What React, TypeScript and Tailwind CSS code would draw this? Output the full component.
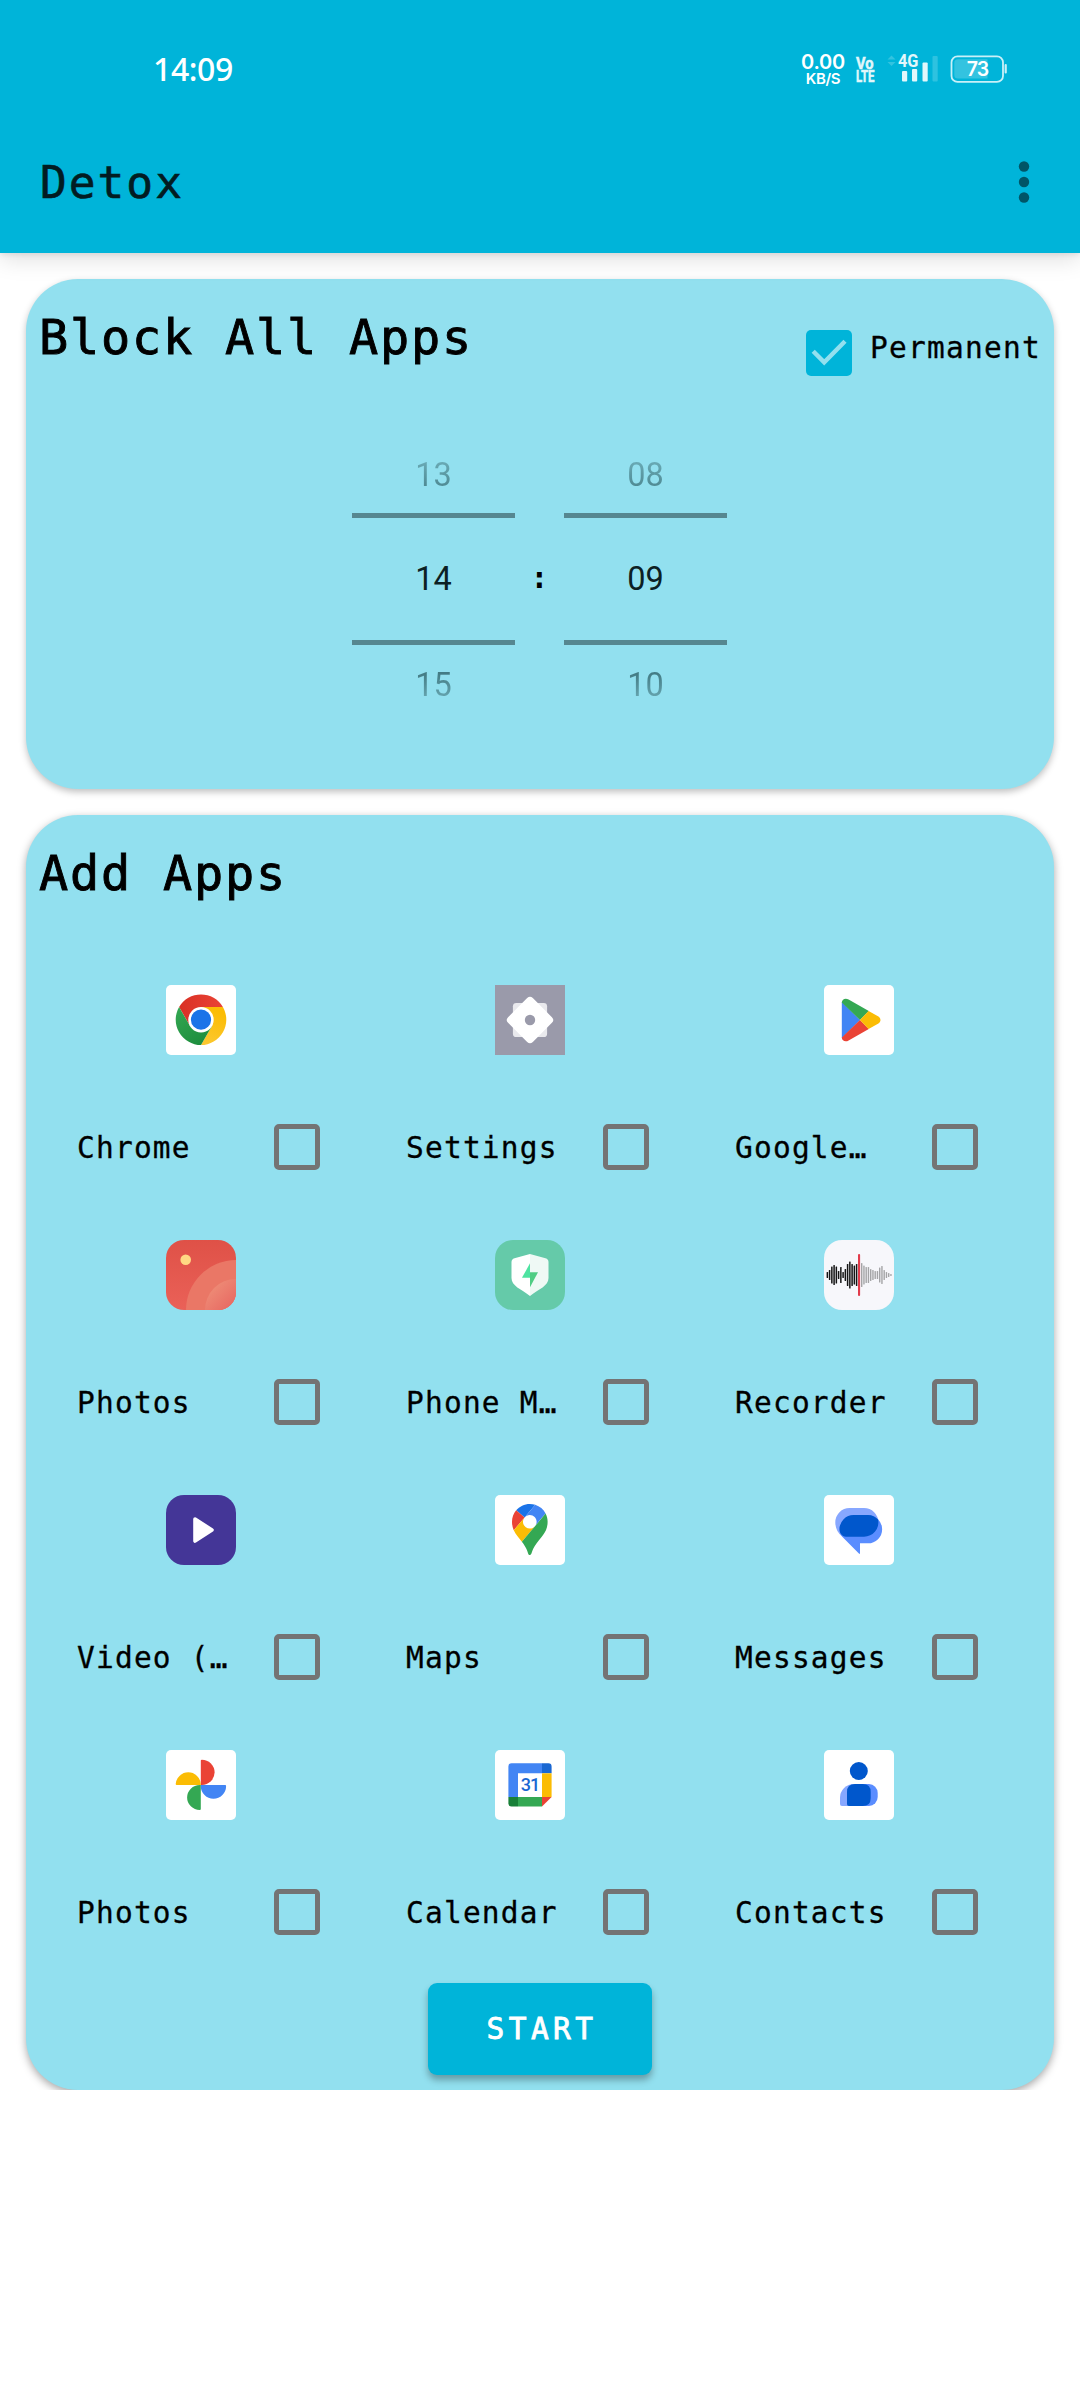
import type { ReactNode } from "react";

const MONO = "font-['DejaVu_Sans_Mono',monospace]";

function Tile({ color, radius, children }: { color: string; radius: number; children: ReactNode }) {
  return (
    <svg width="70" height="70" viewBox="0 0 70 70" className="block">
      <rect width="70" height="70" rx={radius} fill={color} />
      {children}
    </svg>
  );
}

const ChromeIcon = () => (
  <Tile color="#fff" radius={5}>
    <defs>
      <linearGradient id="chromeRed" x1="0" x2="1">
        <stop offset="0" stopColor="#d93025" />
        <stop offset="1" stopColor="#ea4335" />
      </linearGradient>
      <linearGradient id="chromeYellow" x1="0" y1="1" x2="0.3" y2="0">
        <stop offset="0" stopColor="#fcc934" />
        <stop offset="1" stopColor="#fbbc04" />
      </linearGradient>
      <linearGradient id="chromeGreen" x1="0.6" y1="1" x2="0" y2="0">
        <stop offset="0" stopColor="#1e8e3e" />
        <stop offset="1" stopColor="#34a853" />
      </linearGradient>
    </defs>
    <path d="M13.1 22.05A25.3 25.3 0 0 1 56.9 22.05H35V34.7L24.04 41Z" fill="url(#chromeRed)" />
    <path d="M56.9 22.05A25.3 25.3 0 0 1 35 60L45.96 41 35 34.7V22.05Z" fill="url(#chromeYellow)" />
    <path d="M35 60A25.3 25.3 0 0 1 13.1 22.05L24.04 41 35 34.7 45.96 41Z" fill="url(#chromeGreen)" />
    <circle cx="35" cy="34.7" r="12.7" fill="#fff" />
    <circle cx="35" cy="34.7" r="10.1" fill="#1a73e8" />
  </Tile>
);

const SettingsIcon = () => (
  <Tile color="#9a9aaa" radius={0}>
    <rect x="17.9" y="17.9" width="34.2" height="34.2" rx="3.4" fill="#e9e9ed" />
    <rect x="17.5" y="17.5" width="35" height="35" rx="4" fill="#fff" transform="rotate(45 35 35)" />
    <circle cx="35" cy="35" r="5.2" fill="#9a9aaa" />
  </Tile>
);

const PlayStoreIcon = () => (
  <Tile color="#fff" radius={5}>
    <path d="M17.8 17L36.2 35 17.8 53Z" fill="#4285f4" />
    <path d="M17.8 17.5C18 14 21.5 12.6 24.6 14.5L44.8 26 36 35Z" fill="#34a853" />
    <path d="M17.8 52.5C18 56 21.5 57.4 24.6 55.5L44.8 44 36 35Z" fill="#ea4335" />
    <path d="M44.6 25.9L54 31.2C57.3 33.1 57.3 36.9 54 38.8L44.6 44.1 35.9 35Z" fill="#fbbc04" />
  </Tile>
);

const GalleryIcon = () => (
  <Tile color="url(#galleryBg)" radius={18}>
    <defs>
      <linearGradient id="galleryBg" x1="0" y1="0" x2="0" y2="1">
        <stop offset="0" stopColor="#df5147" />
        <stop offset="1" stopColor="#ea6158" />
      </linearGradient>
      <linearGradient id="galleryArc" x1="0.2" y1="0.2" x2="1" y2="1">
        <stop offset="0" stopColor="#ee8d77" />
        <stop offset="1" stopColor="#e7645f" />
      </linearGradient>
      <clipPath id="galleryClip">
        <rect width="70" height="70" rx="18" />
      </clipPath>
    </defs>
    <g clipPath="url(#galleryClip)">
      <circle cx="70" cy="70" r="50" fill="#ea7766" />
      <path d="M39 70A31 31 0 0 1 70 39V70Z" fill="url(#galleryArc)" />
    </g>
    <circle cx="19.7" cy="19.7" r="5.3" fill="#ffd883" />
  </Tile>
);

const PhoneManagerIcon = () => (
  <Tile color="#65caa9" radius={18}>
    <path d="M35 14L50.5 18.3Q53.5 19.2 53.5 22V38C53.5 46 44 49 35 56Z" fill="#eff9f5" />
    <path d="M35 14L19.5 18.3Q16.5 19.2 16.5 22V38C16.5 46 26 49 35 56Z" fill="#fff" />
    <path d="M35 23.3L27 37.8H35Z" fill="#4ee3a1" />
    <path d="M35 32.2H43L35 47.3Z" fill="#50cd84" />
  </Tile>
);

const PLAYED = [6, 10, 17, 20, 17, 8, 16, 6, 12, 22, 27, 22, 19, 22];
const REMAINING = [24, 19, 16, 16, 12, 10, 8, 8, 15, 18, 10, 6, 4, 2];

const RecorderIcon = () => (
  <Tile color="#f7f7fb" radius={18}>
    {PLAYED.map((h, i) => (
      <rect key={i} x={2.6 + i * 2.25} y={35 - h / 2} width="1.5" height={h} rx="0.5" fill="#151515" />
    ))}
    {REMAINING.map((h, i) => (
      <rect key={i} x={37 + i * 2.25} y={35 - h / 2} width="1.4" height={h} rx="0.5" fill="#a4a4a6" />
    ))}
    <rect x="34" y="14" width="2.1" height="42" rx="1" fill="#e23b4b" />
  </Tile>
);

const VideoIcon = () => (
  <Tile color="#443697" radius={18}>
    <path d="M29 24L46 35 29 46Z" fill="#fff" stroke="#fff" strokeWidth="3.6" strokeLinejoin="round" />
  </Tile>
);

const MapsIcon = () => (
  <Tile color="#fff" radius={5}>
    <g transform="translate(17 9) scale(0.3855)">
      <path fill="#1a73e8" d="M60.2 2.2C55.8.8 51 0 46.1 0 32 0 19.3 6.4 10.8 16.5l21.8 18.3L60.2 2.2z" />
      <path fill="#ea4335" d="M10.8 16.5C4.1 24.5 0 34.9 0 46.1c0 8.7 1.7 15.7 4.6 22l28-33.3-21.8-18.3z" />
      <path fill="#4285f4" d="M46.2 28.5c9.8 0 17.7 7.9 17.7 17.7 0 4.3-1.6 8.3-4.2 11.4 0 0 13.9-16.6 27.5-32.7-5.6-10.8-15.3-19-27-22.7L32.6 34.8c3.3-3.8 8.1-6.3 13.6-6.3" />
      <path fill="#fbbc04" d="M46.2 63.8c-9.8 0-17.7-7.9-17.7-17.7 0-4.3 1.5-8.3 4.1-11.3l-28 33.3c4.8 10.6 12.8 19.2 21 29.9l34.1-40.5c-3.3 3.9-8.1 6.3-13.5 6.3" />
      <path fill="#34a853" d="M59.1 109.2c15.4-24.1 33.3-35 33.3-63 0-7.7-1.9-14.9-5.2-21.3L25.6 98c2.6 3.4 5.3 7.3 7.9 11.3 9.4 14.5 6.8 23.1 12.8 23.1s3.4-8.7 12.8-23.2" />
    </g>
  </Tile>
);

const MessagesIcon = () => (
  <Tile color="#fff" radius={5}>
    <path d="M25.6 13H40A14.35 14.35 0 0 1 40 41.7H18.5C13.5 38 11.3 33 11.3 27.3A14.3 14.3 0 0 1 25.6 13Z" fill="#87a7ff" />
    <path d="M29.8 20H44A14.15 14.15 0 0 1 44 48.3H36V58.3Q36 59.6 34.9 58.6L19 42.5C16.5 40 15.5 37.5 15.5 34.3A14.3 14.3 0 0 1 29.8 20Z" fill="#5a8dff" />
    <path d="M29.8 20H44C48 20 51.5 21.7 54.1 24.6A14.35 14.35 0 0 1 40 41.7H22C18 41.7 15.5 38 15.5 34.3A14.3 14.3 0 0 1 29.8 20Z" fill="#0057cc" />
  </Tile>
);

const GooglePhotosIcon = () => (
  <Tile color="#fff" radius={5}>
    <path d="M34.8 35V10.6Q34.8 9.7 35.8 9.7A12.8 12.65 0 0 1 35.8 35Z" fill="#ea4335" />
    <path d="M34.8 35H59.2Q60.1 35 60.1 36A12.65 12.7 0 0 1 34.8 36Z" fill="#4285f4" />
    <path d="M34.8 35V59.1Q34.8 60 33.8 60A12.7 12.5 0 0 1 33.8 35Z" fill="#34a853" />
    <path d="M34.8 35H10.6Q9.7 35 9.7 34A12.6 12.8 0 0 1 34.8 34Z" fill="#fbbc04" />
  </Tile>
);

const CalendarIcon = () => (
  <Tile color="#fff" radius={5}>
    <path d="M16.6 13.3H47V23.3H23V47H13.4V16.5Q13.4 13.3 16.6 13.3Z" fill="#4285f4" />
    <path d="M47 13.3H53.4Q56.6 13.3 56.6 16.5V23.3H47Z" fill="#1967d2" />
    <path d="M47 23.3H56.6V47H47Z" fill="#fbbc04" />
    <path d="M23 47H47V56.5H23Z" fill="#34a853" />
    <path d="M13.4 47H23V56.5H16.6Q13.4 56.5 13.4 53.3Z" fill="#188038" />
    <path d="M47 47H56.6L47 56.5Z" fill="#ea4335" />
    <text x="35" y="41.2" textAnchor="middle" fontFamily="Roboto, sans-serif" fontSize="18" fontWeight="500" letterSpacing="-1" fill="#1967d2">
      31
    </text>
  </Tile>
);

const ContactsIcon = () => (
  <Tile color="#fff" radius={5}>
    <circle cx="34.8" cy="21" r="9" fill="#0057cc" />
    <path d="M30 34H34V56H18Q16 56 16 54V48A14 14 0 0 1 30 34Z" fill="#87a7ff" />
    <path d="M34 34H45A8.7 9 0 0 1 53.7 43V47A8.7 9 0 0 1 45 56H34Z" fill="#5a8dff" />
    <path d="M31 34H38.7Q46.7 34 46.7 42V48Q46.7 56 38.7 56H25Q23 56 23 54V42Q23 34 31 34Z" fill="#0057cc" />
  </Tile>
);

const APPS: { label: string; Icon: () => ReactNode }[] = [
  { label: "Chrome", Icon: ChromeIcon },
  { label: "Settings", Icon: SettingsIcon },
  { label: "Google…", Icon: PlayStoreIcon },
  { label: "Photos", Icon: GalleryIcon },
  { label: "Phone M…", Icon: PhoneManagerIcon },
  { label: "Recorder", Icon: RecorderIcon },
  { label: "Video (…", Icon: VideoIcon },
  { label: "Maps", Icon: MapsIcon },
  { label: "Messages", Icon: MessagesIcon },
  { label: "Photos", Icon: GooglePhotosIcon },
  { label: "Calendar", Icon: CalendarIcon },
  { label: "Contacts", Icon: ContactsIcon },
];

function StatusBar() {
  return (
    <div className="flex h-[111px] items-start justify-between pr-[72px] pl-[153px] pt-[54px] font-['Roboto',sans-serif] text-white">
      <div className="-mt-[1px] font-['Noto_Sans',sans-serif] text-[32px] leading-[32px] font-medium tracking-[-0.4px]">14:09</div>
      <div className="flex items-start">
        <div className="flex w-[44px] flex-col items-center font-['Inter',sans-serif] font-semibold">
          <span className="text-[20px] leading-[16px] tracking-[-0.2px]">0.00</span>
          <span className="mt-[2px] text-[15px] leading-[14px] tracking-[-0.4px]">KB/S</span>
        </div>
        <svg width="22" height="42" viewBox="0 -6 22 42" className="-mt-[6px] ml-[10px]" fill="#e2f7fb" stroke="#e2f7fb" strokeWidth="0.5" fontFamily="Roboto, sans-serif" fontWeight="700">
          <text x="1" y="14.8" fontSize="17" textLength="17.5" lengthAdjust="spacingAndGlyphs">Vo</text>
          <text x="1" y="28" fontSize="17" textLength="18.5" lengthAdjust="spacingAndGlyphs">LTE</text>
        </svg>
        <svg width="52" height="42" viewBox="0 -6 52 42" className="-mt-[6px] ml-[10px]" fill="#e2f7fb">
          <path d="M0.5 5.5L4.5 1.5 8.5 5.5ZM0.5 8L4.5 12 8.5 8Z" fill="#33c3e0" />
          <text x="11" y="13.3" fontSize="18" fontFamily="Roboto, sans-serif" fontWeight="700" textLength="20.5" lengthAdjust="spacingAndGlyphs">4G</text>
          <rect x="15" y="17" width="5.2" height="10.5" rx="1" />
          <rect x="25" y="15" width="5.2" height="12.5" rx="1" />
          <rect x="35.5" y="8.5" width="5.2" height="19" rx="1" />
          <rect x="45.5" y="2" width="5.2" height="25.5" rx="1" fill="#2ec2e0" />
        </svg>
        <svg width="58" height="30" viewBox="0 0 58 30" className="ml-[11px]">
          <rect x="1.5" y="2.3" width="51.5" height="25.6" rx="6" fill="none" stroke="#c9f0f8" strokeWidth="1.8" />
          <path d="M8 5.2H37.5V24.6H8Q4.3 24.6 4.3 21V8.8Q4.3 5.2 8 5.2Z" fill="#33c3e0" />
          <rect x="54.6" y="10" width="2.2" height="9.5" rx="1" fill="#c9f0f8" />
          <text x="27.5" y="22" textAnchor="middle" fontSize="19.5" fontFamily="Inter, sans-serif" fontWeight="600" letterSpacing="-0.8" fill="#fff">
            73
          </text>
        </svg>
      </div>
    </div>
  );
}

function Wheel({ values }: { values: [string, string, string] }) {
  return (
    <div className="flex w-[163px] flex-col items-center font-['Roboto',sans-serif] text-[32.5px] text-[#0c2023]">
      <div className="h-[58px] bg-gradient-to-b from-[#6aabb6] from-10% to-[#437b84] to-75% bg-clip-text leading-[40px] text-transparent">{values[0]}</div>
      <div className="h-[5px] w-full bg-[#568790]" />
      <div className="h-[122px] leading-[123px]">{values[1]}</div>
      <div className="h-[5px] w-full bg-[#568790]" />
      <div className="mt-[20px] bg-gradient-to-b from-[#437b84] from-20% to-[#6aabb6] to-90% bg-clip-text leading-[40px] text-transparent">{values[2]}</div>
    </div>
  );
}

export default function App() {
  return (
    <div className={`flex h-[2400px] w-[1080px] flex-col bg-white text-black ${MONO}`}>
      <header className="relative z-10 h-[253px] shrink-0 bg-[#00b4d9] shadow-[0_6px_22px_rgba(0,0,0,0.13),0_1px_6px_rgba(0,0,0,0.1)]">
        <StatusBar />
        <div className="flex items-center justify-between pr-[49px] pl-[40px] pt-[42px]">
          <h1 className="text-[44.5px] leading-[60px] tracking-[2px] text-[#021c22] [-webkit-text-stroke:0.6px_#021c22]">Detox</h1>
          <svg width="14" height="44" viewBox="0 0 14 44" fill="#005567" className="-mt-[3px]">
            <circle cx="7" cy="6.5" r="5.2" />
            <circle cx="7" cy="22" r="5.2" />
            <circle cx="7" cy="37.5" r="5.2" />
          </svg>
        </div>
      </header>

      <main className="flex h-[1837px] shrink-0 flex-col gap-[26px] overflow-hidden px-[26px] pt-[26px]">
        <section className="flex h-[510px] shrink-0 flex-col rounded-[52px] bg-[#92e0ef] shadow-[0_3px_7px_rgba(0,0,0,0.25)]">
          <div className="flex items-start justify-between pr-[13px] pl-[13px] pt-[28px]">
            <h2 className="text-[48.5px] leading-[60px] tracking-[1.8px] [-webkit-text-stroke:0.9px_#000]">Block All Apps</h2>
            <label className="mt-[23px] flex">
              <svg width="46" height="46" viewBox="0 0 46 46">
                <rect width="46" height="46" rx="5" fill="#00b4d9" />
                <path d="M7.2 21.2L18.2 32.3 39 11.2" fill="none" stroke="#92e0ef" strokeWidth="4.4" />
              </svg>
              <span className="-mt-[5px] ml-[18px] text-[29.5px] leading-[46px] tracking-[1.25px] [-webkit-text-stroke:0.3px_#000]">Permanent</span>
            </label>
          </div>
          <div className="flex items-start justify-center pt-[79px] pr-[1px]">
            <Wheel values={["13", "14", "15"]} />
            <div className="mt-[63px] w-[49px] text-center text-[29.5px] leading-[120px] font-bold">:</div>
            <Wheel values={["08", "09", "10"]} />
          </div>
        </section>

        <section className="flex h-[1275px] shrink-0 flex-col rounded-[52px] bg-[#92e0ef] shadow-[0_3px_9px_rgba(0,0,0,0.35)]">
          <h2 className="pt-[28px] pl-[13px] text-[48.5px] leading-[60px] tracking-[1.8px] [-webkit-text-stroke:0.9px_#000]">Add Apps</h2>
          <div className="mt-[82px] ml-[10px] grid w-[987px] grid-cols-3">
            {APPS.map(({ label, Icon }, i) => (
              <div key={i} className="h-[255px]">
                <div className="pl-[130px]">
                  <Icon />
                </div>
                <label className="mt-[69px] flex pl-[41px]">
                  <span className="w-[197px] pt-[1px] text-[29.5px] leading-[46px] tracking-[1.2px] whitespace-nowrap [-webkit-text-stroke:0.3px_#000]">{label}</span>
                  <span className="size-[46px] rounded-[5px] border-[5px] border-[#747474]" />
                </label>
              </div>
            ))}
          </div>
          <button className="-mt-[22px] ml-[402px] h-[92px] w-[224px] rounded-[9px] bg-[#00b4d9] pl-[4px] text-[29.5px] leading-[93px] tracking-[4.4px] text-white shadow-[0_5px_7px_rgba(0,0,0,0.3)] [-webkit-text-stroke:0.8px_#fff]">
            START
          </button>
        </section>
      </main>
    </div>
  );
}
